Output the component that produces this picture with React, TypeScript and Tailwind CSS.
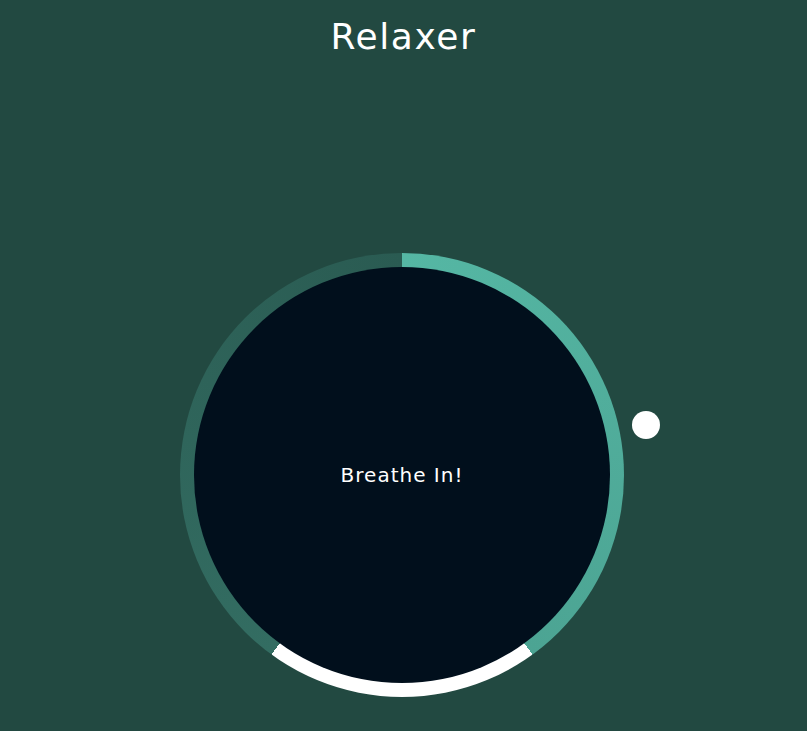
import React from 'react';

const App: React.FC = () => {
    // Ring: teal 0-40%, white 40-60%, dark 60-100%
    return (
        <div className="min-h-screen w-full bg-[#224941] flex flex-col items-center font-['DejaVu_Sans',sans-serif] text-white overflow-hidden">
            <h1 className="mt-[15px] text-[36px] leading-[44px] font-normal tracking-[1.6px]">Relaxer</h1>

            <div className="relative mt-[194px] mr-[3px] h-[444px] w-[444px] shrink-0">
                <div className="absolute inset-0 rounded-full bg-[conic-gradient(#55b7a4_0%,#4ca493_40%,#fff_40%,#fff_60%,#336d62_60%,#2a5b52_100%)]" />
                <div className="absolute inset-[14px] rounded-full bg-[#010f1c] flex items-center justify-center">
                    <p className="text-[20px] tracking-[1px]">Breathe In!</p>
                </div>

                {/* pointer */}
                <span className="absolute left-[452px] top-[158px] h-[28px] w-[28px] rounded-full bg-white" />
            </div>
        </div>
    );
};

export default App;
